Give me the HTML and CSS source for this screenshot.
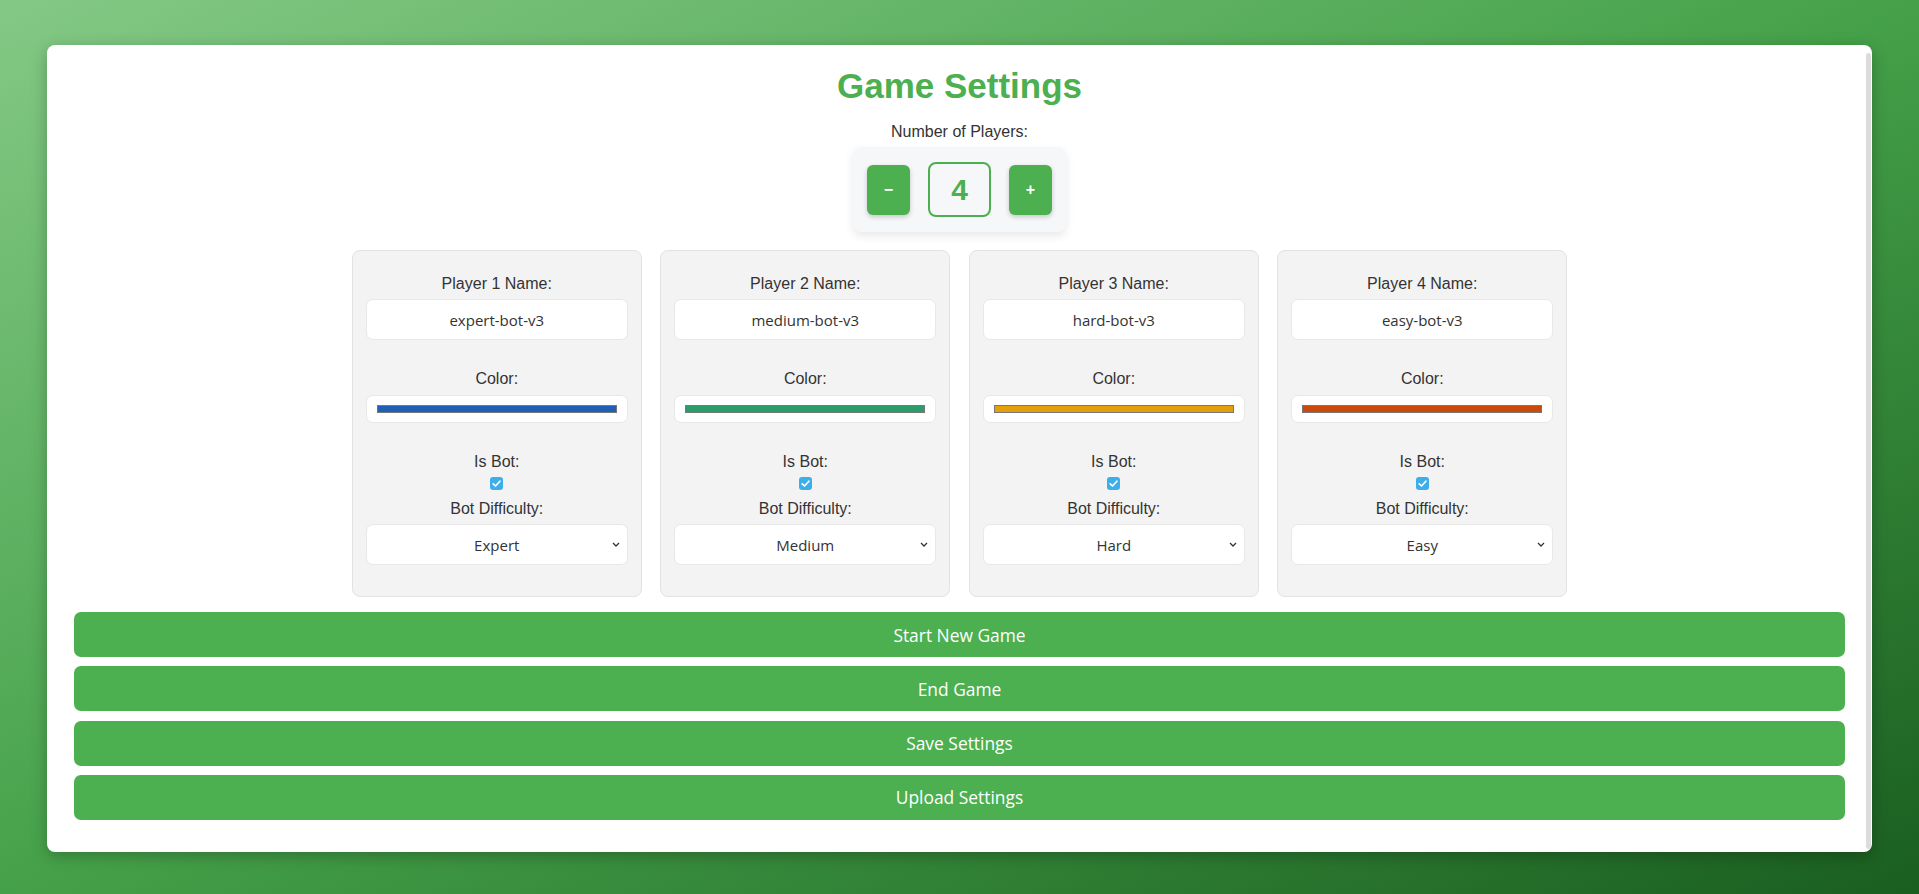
FILE: index.html
```html
<!DOCTYPE html>
<html lang="en">
<head>
<meta charset="utf-8">
<title>Game Settings</title>
<link rel="stylesheet" href="styles.css">
</head>
<body>
<div class="page">
  <div class="settings">
    <h1 class="title">Game Settings</h1>
    <div class="players-label">Number of Players:</div>
    <div class="counter">
      <button class="counter-btn" type="button">−</button>
      <div class="counter-value">4</div>
      <button class="counter-btn" type="button">+</button>
    </div>
    <div class="cards">
      <div class="card">
        <label class="field-label">Player 1 Name:</label>
        <input class="text-input" type="text" value="expert-bot-v3">
        <label class="field-label">Color:</label>
        <div class="color-input"><span class="swatch" style="background:#1f5fb6"></span></div>
        <label class="field-label">Is Bot:</label>
        <input class="check" type="checkbox" checked>
        <label class="field-label">Bot Difficulty:</label>
        <select class="select"><option>Expert</option></select>
      </div>
      <div class="card">
        <label class="field-label">Player 2 Name:</label>
        <input class="text-input" type="text" value="medium-bot-v3">
        <label class="field-label">Color:</label>
        <div class="color-input"><span class="swatch" style="background:#2a9d6a"></span></div>
        <label class="field-label">Is Bot:</label>
        <input class="check" type="checkbox" checked>
        <label class="field-label">Bot Difficulty:</label>
        <select class="select"><option>Medium</option></select>
      </div>
      <div class="card">
        <label class="field-label">Player 3 Name:</label>
        <input class="text-input" type="text" value="hard-bot-v3">
        <label class="field-label">Color:</label>
        <div class="color-input"><span class="swatch" style="background:#e3a008"></span></div>
        <label class="field-label">Is Bot:</label>
        <input class="check" type="checkbox" checked>
        <label class="field-label">Bot Difficulty:</label>
        <select class="select"><option>Hard</option></select>
      </div>
      <div class="card">
        <label class="field-label">Player 4 Name:</label>
        <input class="text-input" type="text" value="easy-bot-v3">
        <label class="field-label">Color:</label>
        <div class="color-input"><span class="swatch" style="background:#c94a0a"></span></div>
        <label class="field-label">Is Bot:</label>
        <input class="check" type="checkbox" checked>
        <label class="field-label">Bot Difficulty:</label>
        <select class="select"><option>Easy</option></select>
      </div>
    </div>
    <div class="actions">
      <button class="action" type="button">Start New Game</button>
      <button class="action" type="button">End Game</button>
      <button class="action" type="button">Save Settings</button>
      <button class="action" type="button">Upload Settings</button>
    </div>
  </div>
</div>
</body>
</html>
```

FILE: styles.css
```css
* { box-sizing: border-box; }

html, body {
  margin: 0;
  height: 100%;
}

body {
  background: linear-gradient(to bottom right, #84c986 0%, #45a149 50%, #1a5e20 100%);
  font-family: "Liberation Sans", Arial, sans-serif;
  color: #333;
}

.page {
  padding: 45px 47px 42px 47px;
  height: 100%;
}

.settings {
  position: relative;
  background: #fff;
  border-radius: 8px;
  box-shadow: 0 4px 16px rgba(0, 0, 0, 0.25);
  padding: 21px 27px 32px 27px;
  height: 807px;
  display: flex;
  flex-direction: column;
  align-items: center;
}

.settings::after {
  content: "";
  position: absolute;
  right: 1px;
  top: 8px;
  bottom: 3px;
  width: 5px;
  border-radius: 3px;
  background: #dcdcdc;
}

.title {
  margin: 0;
  font-size: 35px;
  line-height: 40px;
  font-weight: bold;
  color: #4caf50;
}

.players-label {
  margin-top: 17px;
  font-size: 16px;
  line-height: 18px;
}

.counter {
  margin-top: 6px;
  display: flex;
  align-items: center;
  gap: 18px;
  padding: 15px 14px;
  background: #f6f7f9;
  border-radius: 8px;
  box-shadow: 0 4px 10px rgba(0, 0, 0, 0.09);
}

.counter-btn {
  width: 43px;
  height: 50px;
  border: none;
  border-radius: 6px;
  background: #4caf50;
  color: #fff;
  font-family: "Liberation Sans", Arial, sans-serif;
  font-size: 16px;
  font-weight: bold;
  box-shadow: 0 2px 5px rgba(0, 0, 0, 0.2);
  padding: 0;
}

.counter-value {
  width: 63px;
  height: 55px;
  border: 2px solid #4caf50;
  border-radius: 8px;
  display: flex;
  align-items: center;
  justify-content: center;
  font-size: 30px;
  font-weight: bold;
  color: #4caf50;
}

.cards {
  margin-top: 18px;
  display: flex;
  justify-content: center;
  gap: 18.5px;
}

.card {
  width: 290px;
  background: #f3f3f3;
  border: 1px solid #e2e2e2;
  border-radius: 8px;
  padding: 24px 13px 31px;
  display: flex;
  flex-direction: column;
  align-items: center;
}

.field-label {
  display: block;
  font-size: 16px;
  line-height: 18px;
  margin-bottom: 6px;
}

.text-input,
.select,
.color-input {
  width: 100%;
  background: #fff;
  border: 1px solid #e8e8e8;
  border-radius: 7px;
  font-family: "Open Sans", "Noto Sans", sans-serif;
  font-size: 15px;
  color: #333;
}

.text-input {
  height: 41px;
  text-align: center;
  margin-bottom: 30px;
  outline: none;
}

.color-input {
  height: 28px;
  padding: 9px 10px 10px;
  margin-top: 1px;
  margin-bottom: 30px;
  display: flex;
}

.swatch {
  flex: 1;
  height: 8px;
  border: 1px solid #777;
}

.check {
  appearance: none;
  -webkit-appearance: none;
  width: 13px;
  height: 13px;
  margin: 0 0 10px;
  border-radius: 3px;
  background-color: #3daee9;
  background-image: url("data:image/svg+xml;utf8,<svg xmlns='http://www.w3.org/2000/svg' viewBox='0 0 13 13'><path d='M3.2 6.8 L5.5 9 L9.9 4.2' fill='none' stroke='white' stroke-width='1.7' stroke-linecap='round' stroke-linejoin='round'/></svg>");
  background-repeat: no-repeat;
  background-size: 13px 13px;
}

.select {
  appearance: none;
  -webkit-appearance: none;
  height: 41px;
  text-align: center;
  text-align-last: center;
  padding: 0 6px;
  background-image: url("data:image/svg+xml;utf8,<svg xmlns='http://www.w3.org/2000/svg' viewBox='0 0 8 5'><path d='M1 1 L4 4 L7 1' fill='none' stroke='%23333' stroke-width='1.3'/></svg>");
  background-repeat: no-repeat;
  background-size: 8px 5px;
  background-position: right 7px center;
}

.actions {
  margin-top: 15px;
  width: 100%;
  display: flex;
  flex-direction: column;
  gap: 9.3px;
}

.action {
  width: 100%;
  height: 45px;
  border: none;
  border-radius: 7px;
  background: #4caf50;
  color: #fff;
  font-family: "Open Sans", "Noto Sans", sans-serif;
  font-size: 17.4px;
}
```
